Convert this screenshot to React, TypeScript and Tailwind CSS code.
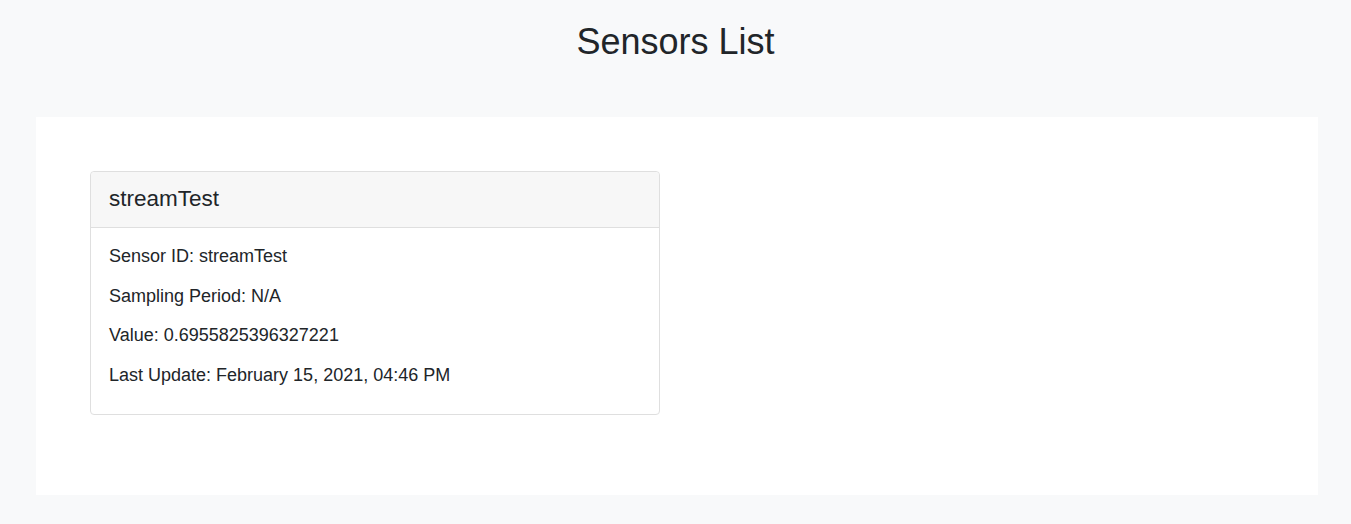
export default function App() {
  const sensor = {
    id: 'streamTest',
    samplingPeriod: 'N/A',
    value: '0.6955825396327221',
    lastUpdate: 'February 15, 2021, 04:46 PM',
  };
  return (
    <div className="min-h-[524px] bg-[#f8f9fa] text-[#212529] font-['Liberation_Sans',Arial,sans-serif]">
      <h1 className="pt-[20px] text-center text-[36px] leading-[1.2] font-normal">Sensors List</h1>
      <div className="mt-[54px] ml-[36px] w-[1282px] h-[378px] bg-white p-[54px]">
        <div className="w-[570px] rounded-[4px] border border-[#dfdfdf] bg-white">
          <div className="border-b border-[#dfdfdf] bg-[#f7f7f7] px-[18px] pt-[11px] pb-[13px] text-[22.5px] leading-[31px] rounded-t-[4px]">
            {sensor.id}
          </div>
          <div className="px-[18px] pt-[15px] pb-[25px] text-[18px] leading-[27px]">
            <p className="mb-[12.5px]">Sensor ID: {sensor.id}</p>
            <p className="mb-[12.5px]">Sampling Period: {sensor.samplingPeriod}</p>
            <p className="mb-[12.5px]">Value: {sensor.value}</p>
            <p>Last Update: {sensor.lastUpdate}</p>
          </div>
        </div>
      </div>
    </div>
  );
}
